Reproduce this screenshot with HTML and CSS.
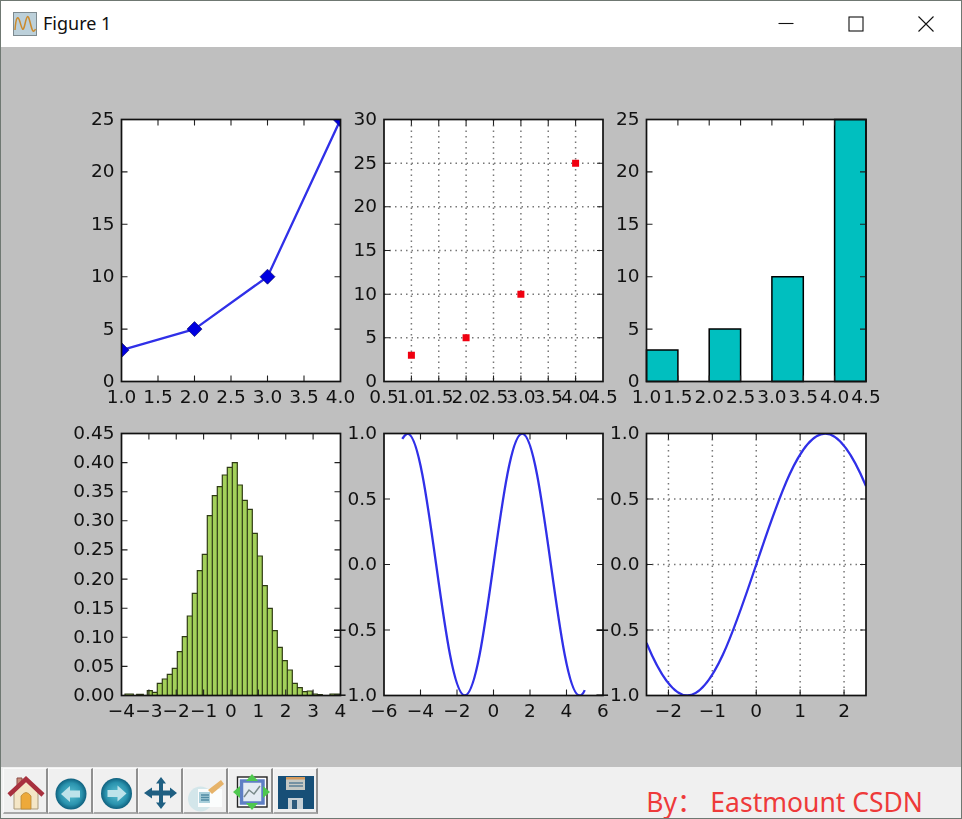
FILE: index.html
```html
<!DOCTYPE html>
<html lang="en">
<head>
<meta charset="utf-8">
<title>Figure 1</title>
<link rel="stylesheet" href="styles.css">
</head>
<body>
<div class="window">
  <header class="titlebar">
    <svg class="app-icon" viewBox="0 0 24 24"><rect class="app-bg" x="0.5" y="0.5" width="23" height="23"/><path class="app-wave" d="M2 18C3 4 5 3 7 10S10 21 12 12 15 2 17 10 20 22 22.500 17"/></svg>
    <span class="title">Figure 1</span>
    <div class="controls">
      <div class="control"><svg class="glyph" viewBox="0 0 16 16"><path d="M0.500 7.500H15.500"/></svg></div>
      <div class="control"><svg class="glyph" viewBox="0 0 16 16"><rect x="1" y="1" width="14" height="14"/></svg></div>
      <div class="control"><svg class="glyph" viewBox="0 0 16 16"><path d="M0.500 0.500L15.500 15.500M15.500 0.500L0.500 15.500"/></svg></div>
    </div>
  </header>

  <main class="figure">
    <svg class="plots" viewBox="1 47 960 720">
      <defs>
        <clipPath id="c1"><rect x="121.500" y="119.500" width="219" height="262"/></clipPath>
        <clipPath id="c5"><rect x="384" y="433.500" width="219" height="262"/></clipPath>
        <clipPath id="c6"><rect x="646.500" y="433.500" width="219.500" height="262"/></clipPath>
      </defs>

      <!-- axes 1 -->
      <rect class="bg" x="121.500" y="119.500" width="219" height="262"/>
      <g clip-path="url(#c1)">
        <path class="curve" d="M121.500 350.100L194.500 329.100L267.500 276.700L340.500 119.500"/>
        <path class="diamond" d="M121.500 342.600l7.500 7.500-7.500 7.500-7.500-7.500zM194.500 321.600l7.500 7.500-7.500 7.500-7.500-7.500zM267.500 269.200l7.500 7.500-7.500 7.500-7.500-7.500zM340.500 112l7.500 7.500-7.500 7.500-7.500-7.500z"/>
      </g>
      <path class="tick" d="M158 381.500v-6M194.500 381.500v-6M231 381.500v-6M267.500 381.500v-6M304 381.500v-6M158 119.500v6M194.500 119.500v6M231 119.500v6M267.500 119.500v6M304 119.500v6M121.500 329.100h6M121.500 276.700h6M121.500 224.300h6M121.500 171.900h6M340.500 329.100h-6M340.500 276.700h-6M340.500 224.300h-6M340.500 171.900h-6"/>
      <rect class="frame" x="121.500" y="119.500" width="219" height="262"/>

      <!-- axes 2 -->
      <rect class="bg" x="384" y="119.500" width="219" height="262"/>
      <path class="grid" d="M411.400 119.500V381.500M438.750 119.500V381.500M466.100 119.500V381.500M493.500 119.500V381.500M520.900 119.500V381.500M548.250 119.500V381.500M575.600 119.500V381.500M384 337.800H603M384 294.200H603M384 250.500H603M384 206.800H603M384 163.200H603"/>
      <path class="square" d="M407.900 351.800h7v7h-7zM462.600 334.300h7v7h-7zM517.400 290.700h7v7h-7zM572.100 159.700h7v7h-7z"/>
      <path class="tick" d="M411.400 381.500v-6M438.750 381.500v-6M466.100 381.500v-6M493.500 381.500v-6M520.900 381.500v-6M548.250 381.500v-6M575.600 381.500v-6M411.400 119.500v6M438.750 119.500v6M466.100 119.500v6M493.500 119.500v6M520.900 119.500v6M548.250 119.500v6M575.600 119.500v6M384 337.800h6M384 294.200h6M384 250.500h6M384 206.800h6M384 163.200h6M603 337.800h-6M603 294.200h-6M603 250.500h-6M603 206.800h-6M603 163.200h-6"/>
      <rect class="frame" x="384" y="119.500" width="219" height="262"/>

      <!-- axes 3 -->
      <rect class="bg" x="646.500" y="119.500" width="219.500" height="262"/>
      <path class="bar" d="M646.500 381.500V350.100H677.900V381.500zM709.200 381.500V329.100H740.600V381.500zM771.900 381.500V276.700H803.300V381.500zM834.600 381.500V119.500H866V381.500z"/>
      <path class="tick" d="M677.900 381.500v-6M709.200 381.500v-6M740.600 381.500v-6M771.900 381.500v-6M803.300 381.500v-6M834.600 381.500v-6M677.900 119.500v6M709.200 119.500v6M740.600 119.500v6M771.900 119.500v6M803.300 119.500v6M834.600 119.500v6M646.500 329.100h6M646.500 276.700h6M646.500 224.300h6M646.500 171.900h6M866 329.100h-6M866 276.700h-6M866 224.300h-6M866 171.900h-6"/>
      <rect class="frame" x="646.500" y="119.500" width="219.500" height="262"/>

      <!-- axes 4 -->
      <rect class="bg" x="121.500" y="433.500" width="219" height="262"/>
      <path class="hist" d="M125 695.500V694H133.300V695.500zM136.700 695.500V694.300H143.300V695.500zM147.300 695.500V690.700h5V695.500zM152.300 695.500V692.300h5V695.500zM157.300 695.500V683.300h5V695.500zM162.300 695.500V679h5V695.500zM167.300 695.500V674.300h5V695.500zM172.300 695.500V668.300h5V695.500zM177.300 695.500V651.700h5V695.500zM182.300 695.500V636.700h5V695.500zM187.300 695.500V616h5V695.500zM192.300 695.500V593.300h5V695.500zM197.300 695.500V570.700h5V695.500zM202.300 695.500V554.300h5V695.500zM207.300 695.500V515.700h5V695.500zM212.300 695.500V495.700h5V695.500zM217.300 695.500V486.700h5V695.500zM222.300 695.500V475h5V695.500zM227.300 695.500V467.300h5V695.500zM232.300 695.500V462.700h5V695.500zM237.300 695.500V485h5V695.500zM242.300 695.500V500.300h5V695.500zM247.300 695.500V509.300h5V695.500zM252.300 695.500V533.300h5V695.500zM257.300 695.500V556h5V695.500zM262.300 695.500V585.700h5V695.500zM267.300 695.500V608.300h5V695.500zM272.300 695.500V630.700h5V695.500zM277.300 695.500V647.300h5V695.500zM282.300 695.500V660.700h5V695.500zM287.300 695.500V670h5V695.500zM292.300 695.500V683.300h5V695.500zM297.300 695.500V687.700h5V695.500zM302.300 695.500V691.700h5V695.500zM307.300 695.500V691h5V695.500zM312.300 695.500V694h5V695.500zM317.300 695.500V694.700h5V695.500zM330 695.500V694H340V695.500z"/>
      <path class="tick" d="M148.900 695.500v-6M176.250 695.500v-6M203.600 695.500v-6M231 695.500v-6M258.400 695.500v-6M285.750 695.500v-6M313.100 695.500v-6M148.900 433.500v6M176.250 433.500v6M203.600 433.500v6M231 433.500v6M258.400 433.500v6M285.750 433.500v6M313.100 433.500v6M121.500 666.400h6M121.500 637.300h6M121.500 608.200h6M121.500 579.100h6M121.500 549.900h6M121.500 520.800h6M121.500 491.700h6M121.500 462.600h6M340.500 666.400h-6M340.500 637.300h-6M340.500 608.200h-6M340.500 579.100h-6M340.500 549.900h-6M340.500 520.800h-6M340.500 491.700h-6M340.500 462.600h-6"/>
      <rect class="frame" x="121.500" y="433.500" width="219" height="262"/>

      <!-- axes 5 -->
      <rect class="bg" x="384" y="433.500" width="219" height="262"/>
      <g clip-path="url(#c5)">
        <path class="curve" d="M402.250 438.900Q405 434.500 407.500 433.500C428.400 433.500 443.900 695.500 464.800 695.500C485.700 695.500 501.300 433.500 522.200 433.500C543.100 433.500 558.600 695.500 579.500 695.500Q582.500 695.500 584.750 690.100"/>
      </g>
      <path class="tick" d="M420.500 695.500v-6M457 695.500v-6M493.500 695.500v-6M530 695.500v-6M566.500 695.500v-6M420.500 433.500v6M457 433.500v6M493.500 433.500v6M530 433.500v6M566.500 433.500v6M384 499h6M384 564.500h6M384 630h6M603 499h-6M603 564.500h-6M603 630h-6"/>
      <rect class="frame" x="384" y="433.500" width="219" height="262"/>

      <!-- axes 6 -->
      <rect class="bg" x="646.500" y="433.500" width="219.500" height="262"/>
      <path class="grid" d="M668.450 433.500V695.500M712.350 433.500V695.500M756.250 433.500V695.500M800.150 433.500V695.500M844.050 433.500V695.500M646.500 499H866M646.500 564.500H866M646.500 630H866"/>
      <g clip-path="url(#c6)">
        <path class="curve" d="M646.500 642.900C660.100 675.400 673.700 695.500 687.300 695.500C737.500 695.500 775 433.500 825.200 433.500C838.800 433.500 852.400 453.600 866 486.100"/>
      </g>
      <path class="tick" d="M668.450 695.500v-6M712.350 695.500v-6M756.250 695.500v-6M800.150 695.500v-6M844.050 695.500v-6M668.450 433.500v6M712.350 433.500v6M756.250 433.500v6M800.150 433.500v6M844.050 433.500v6M646.500 499h6M646.500 564.500h6M646.500 630h6M866 499h-6M866 564.500h-6M866 630h-6"/>
      <rect class="frame" x="646.500" y="433.500" width="219.500" height="262"/>

      <!-- y labels -->
      <g class="ylabels">
        <text x="114.500" y="125">25</text><text x="114.500" y="177.400">20</text><text x="114.500" y="229.800">15</text><text x="114.500" y="282.200">10</text><text x="114.500" y="334.600">5</text><text x="114.500" y="387">0</text>
        <text x="377" y="125">30</text><text x="377" y="168.700">25</text><text x="377" y="212.300">20</text><text x="377" y="256">15</text><text x="377" y="299.700">10</text><text x="377" y="343.300">5</text><text x="377" y="387">0</text>
        <text x="639.500" y="125">25</text><text x="639.500" y="177.400">20</text><text x="639.500" y="229.800">15</text><text x="639.500" y="282.200">10</text><text x="639.500" y="334.600">5</text><text x="639.500" y="387">0</text>
        <text x="114.500" y="439">0.45</text><text x="114.500" y="468.100">0.40</text><text x="114.500" y="497.200">0.35</text><text x="114.500" y="526.300">0.30</text><text x="114.500" y="555.400">0.25</text><text x="114.500" y="584.600">0.20</text><text x="114.500" y="613.700">0.15</text><text x="114.500" y="642.800">0.10</text><text x="114.500" y="671.900">0.05</text><text x="114.500" y="701">0.00</text>
        <text x="377" y="439">1.0</text><text x="377" y="504.500">0.5</text><text x="377" y="570">0.0</text><text x="377" y="635.500">−0.5</text><text x="377" y="701">−1.0</text>
        <text x="639.500" y="439">1.0</text><text x="639.500" y="504.500">0.5</text><text x="639.500" y="570">0.0</text><text x="639.500" y="635.500">−0.5</text><text x="639.500" y="701">−1.0</text>
      </g>
      <!-- x labels -->
      <g class="xlabels">
        <text x="121.500" y="403">1.0</text><text x="158" y="403">1.5</text><text x="194.500" y="403">2.0</text><text x="231" y="403">2.5</text><text x="267.500" y="403">3.0</text><text x="304" y="403">3.5</text><text x="340.500" y="403">4.0</text>
        <text x="384" y="403">0.5</text><text x="411.400" y="403">1.0</text><text x="438.750" y="403">1.5</text><text x="466.100" y="403">2.0</text><text x="493.500" y="403">2.5</text><text x="520.900" y="403">3.0</text><text x="548.250" y="403">3.5</text><text x="575.600" y="403">4.0</text><text x="603" y="403">4.5</text>
        <text x="646.500" y="403">1.0</text><text x="677.900" y="403">1.5</text><text x="709.200" y="403">2.0</text><text x="740.600" y="403">2.5</text><text x="771.900" y="403">3.0</text><text x="803.300" y="403">3.5</text><text x="834.600" y="403">4.0</text><text x="866" y="403">4.5</text>
        <text x="121.500" y="716.500">−4</text><text x="148.900" y="716.500">−3</text><text x="176.250" y="716.500">−2</text><text x="203.600" y="716.500">−1</text><text x="231" y="716.500">0</text><text x="258.400" y="716.500">1</text><text x="285.750" y="716.500">2</text><text x="313.100" y="716.500">3</text><text x="340.500" y="716.500">4</text>
        <text x="384" y="716.500">−6</text><text x="420.500" y="716.500">−4</text><text x="457" y="716.500">−2</text><text x="493.500" y="716.500">0</text><text x="530" y="716.500">2</text><text x="566.500" y="716.500">4</text><text x="603" y="716.500">6</text>
        <text x="668.450" y="716.500">−2</text><text x="712.350" y="716.500">−1</text><text x="756.250" y="716.500">0</text><text x="800.150" y="716.500">1</text><text x="844.050" y="716.500">2</text>
      </g>
    </svg>
  </main>

  <footer class="toolbar">
    <div class="tool">
      <svg class="icon" viewBox="0 0 40 40">
        <path class="i-chimney" d="M12 6H17V17H12z"/>
        <path class="i-wall" d="M9 20L21 9L33 20V37H9z"/>
        <path class="i-door" d="M16 37V24Q21 17 26 24V37z"/>
        <path class="i-roof" d="M4 23L21 7L38 23" />
      </svg>
    </div>
    <div class="tool">
      <svg class="icon" viewBox="0 0 40 40">
        <defs><radialGradient id="ball" cx="50%" cy="50%" r="50%"><stop offset="0" stop-color="#5cc0d2"/><stop offset="0.7" stop-color="#2a93ae"/><stop offset="1" stop-color="#0f607e"/></radialGradient></defs>
        <circle cx="21" cy="22" r="15.500" fill="url(#ball)"/>
        <path class="i-arrow" d="M11 22L20 14V18.500H30V25.500H20V30z"/>
      </svg>
    </div>
    <div class="tool">
      <svg class="icon" viewBox="0 0 40 40">
        <circle cx="21.500" cy="21.500" r="15.500" fill="url(#ball)"/>
        <path class="i-arrow" d="M31.500 21.500L22.500 13.500V18H12.500V25H22.500V29.500z"/>
      </svg>
    </div>
    <div class="tool">
      <svg class="icon" viewBox="0 0 40 40">
        <path class="i-pan" d="M21 5L26 11.500H23V18.500H30V15.500L37 21L30 26.500V23.500H23V30.500H26L21 37L16 30.500H19V23.500H12V26.500L4 21L12 15.500V18.500H19V11.500H16z"/>
      </svg>
    </div>
    <div class="tool">
      <svg class="icon" viewBox="0 0 40 40">
        <circle class="i-halo" cx="15.500" cy="27" r="12.500"/>
        <path class="i-paper" d="M13 17H37V35H13z"/>
        <rect class="i-note" x="14" y="20" width="11" height="11"/>
        <path class="i-noteline" d="M16 23H24M16 25.500H24M16 28H24"/>
        <path class="i-pencil" d="M23 18L36 8L39 12L27 22z"/>
      </svg>
    </div>
    <div class="tool">
      <svg class="icon" viewBox="0 0 40 40">
        <rect class="i-zframe" x="7.500" y="5" width="29.500" height="30"/>
        <rect class="i-zinner" x="11.500" y="9" width="21.500" height="22"/>
        <path class="i-zline" d="M14 25L19 18L24 22L30 14"/>
        <path class="i-zarrow" d="M22 2L28 9H16zM22 38L28 31H16zM3 20L10 14V26zM40 20L33 14V26z"/>
      </svg>
    </div>
    <div class="tool">
      <svg class="icon" viewBox="0 0 40 40">
        <path class="i-disk" d="M3 4H39V37H3z"/>
        <rect class="i-label" x="11" y="5" width="19" height="13"/>
        <rect class="i-stripe" x="11" y="5" width="19" height="2.500"/>
        <path class="i-labelline" d="M14 11H28M14 14H28"/>
        <rect class="i-shutter" x="13" y="26" width="15" height="11"/>
        <rect class="i-slot" x="17" y="28" width="5" height="9"/>
      </svg>
    </div>
    <span class="credit">By： Eastmount CSDN</span>
  </footer>
</div>
</body>
</html>
```
FILE: styles.css
```css
* { box-sizing: border-box; }
html, body { margin: 0; padding: 0; }
body { width: 962px; height: 819px; overflow: hidden; background: #bfbfbf; }

.window {
  width: 962px;
  height: 819px;
  display: flex;
  flex-direction: column;
  border: 1px solid #6f7872;
  overflow: hidden;
}

.titlebar {
  height: 46px;
  flex: none;
  display: flex;
  align-items: center;
  padding-left: 12px;
  background: #fff;
}
.app-icon { width: 24px; height: 24px; flex: none; }
.app-bg { fill: #bcd0da; stroke: #7d8a90; stroke-width: 1; }
.app-wave { fill: none; stroke: #cc8a2c; stroke-width: 1.5; }
.title {
  margin: 0 0 2px 6px;
  font: 18px "Noto Sans", "Open Sans", sans-serif;
  color: #111;
}
.controls { margin-left: auto; display: flex; }
.control { width: 70px; height: 46px; display: flex; align-items: center; justify-content: center; }
.glyph { width: 16px; height: 16px; margin-top: 0; }
.glyph path, .glyph rect { fill: none; stroke: #111; stroke-width: 1.1; }

.figure { height: 720px; flex: none; background: #bfbfbf; }
.plots { display: block; width: 960px; height: 720px; filter: blur(0.45px); }
.bg { fill: #fff; }
.frame { fill: none; stroke: #111; stroke-width: 1.7; }
.tick { fill: none; stroke: #222; stroke-width: 1.1; }
.grid { fill: none; stroke: #777; stroke-width: 1.5; stroke-dasharray: 1.5 4; }
.curve { fill: none; stroke: #3030e8; stroke-width: 2.3; stroke-linejoin: round; }
.diamond { fill: #0000e0; stroke: #10106a; stroke-width: 0.7; }
.square { fill: #f00010; }
.bar { fill: #00bfbf; stroke: #000; stroke-width: 1.5; }
.hist { fill: #a3d05a; stroke: #2e3a14; stroke-width: 1.2; }
.ylabels text, .xlabels text { font: 18.500px "DejaVu Sans", sans-serif; fill: #111; }
.ylabels text { text-anchor: end; }
.xlabels text { text-anchor: middle; }

.toolbar {
  height: 51px;
  flex: none;
  display: flex;
  align-items: flex-start;
  padding: 1px 0 0 2px;
  background: #f0f0f0;
}
.tool {
  width: 45px;
  height: 46px;
  flex: none;
  display: flex;
  align-items: flex-end;
  justify-content: center;
  border-top: 1px solid #fafafa;
  border-left: 1px solid #fafafa;
  border-right: 2px solid #8f8f8f;
  border-bottom: 2px solid #a8a8a8;
}
.icon { width: 40px; height: 40px; flex: none; overflow: visible; filter: blur(0.4px); }

.i-chimney { fill: #c98b78; stroke: #8c4a45; stroke-width: 1; }
.i-wall { fill: #f4e6c6; stroke: #a99a7c; stroke-width: 1; }
.i-door { fill: #eda93a; stroke: #b88938; stroke-width: 0.8; }
.i-roof { fill: none; stroke: #a8303e; stroke-width: 4.5; }
.i-arrow { fill: #bde3ea; }
.i-pan { fill: #1f5f82; }
.i-halo { fill: #d3e6ea; }
.i-paper { fill: #fbfdfd; }
.i-note { fill: #a9cfdb; }
.i-noteline { fill: none; stroke: #4f8ba4; stroke-width: 1.4; }
.i-pencil { fill: #e6b36a; }
.i-zframe { fill: #fff; stroke: #222; stroke-width: 1.4; }
.i-zinner { fill: #e4ebf3; stroke: #5f7fc4; stroke-width: 3.5; }
.i-zline { fill: none; stroke: #7a8a8a; stroke-width: 1.5; }
.i-zarrow { fill: #4fc84f; }
.i-disk { fill: #174f77; }
.i-label { fill: #c5c8c4; }
.i-stripe { fill: #d59a5c; }
.i-labelline { fill: none; stroke: #5b7f97; stroke-width: 1.3; }
.i-shutter { fill: #c6d0d6; }
.i-slot { fill: #2d5a7c; }

.credit {
  margin-left: auto;
  margin-right: 38px;
  margin-top: 17px;
  font: 26.500px/34px "Noto Sans", "Noto Sans CJK SC", sans-serif;
  color: #ee3a3a;
  white-space: nowrap;
}
```
